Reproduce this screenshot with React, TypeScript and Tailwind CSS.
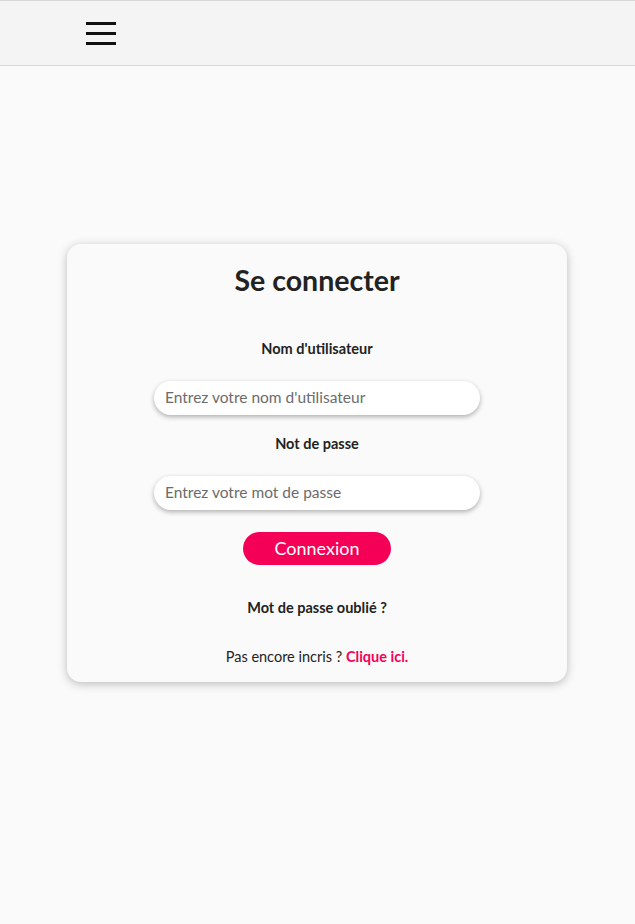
import React from 'react';

export default function App() {
  return (
    <div className="min-h-screen bg-[#fafafa] font-['Lato',sans-serif] text-[#222]">
      {/* Header */}
      <header className="h-[66px] border-y border-[#d9d9d9] bg-[#f4f4f4] flex items-center">
        <button className="ml-[86px] flex flex-col gap-[7px]">
          <span className="block w-[30px] h-[3px] bg-[#111]" />
          <span className="block w-[30px] h-[3px] bg-[#111]" />
          <span className="block w-[30px] h-[3px] bg-[#111]" />
        </button>
      </header>

      {/* Login card */}
      <main className="pt-[178px]">
        <div className="ml-[67px] w-[500px] rounded-[14px] bg-[#fafafa] shadow-[0_2px_10px_rgba(0,0,0,0.25)] flex flex-col items-center pt-[18px] pb-[15px]">
          <h1 className="text-[28.5px] leading-[36px] font-bold">Se connecter</h1>

          <label className="mt-[41px] text-[14.5px] leading-[20px] font-bold">Nom d'utilisateur</label>
          <input
            type="text"
            placeholder="Entrez votre nom d'utilisateur"
            className="mt-[22px] w-[326px] h-[34px] rounded-full bg-white px-[11px] pb-[3px] text-[15.5px] shadow-[0_2px_5px_rgba(0,0,0,0.3)] outline-none placeholder:text-[#6b6b6b]"
          />

          <label className="mt-[19px] text-[14.5px] leading-[20px] font-bold">Not de passe</label>
          <input
            type="password"
            placeholder="Entrez votre mot de passe"
            className="mt-[22px] w-[326px] h-[34px] rounded-full bg-white px-[11px] pb-[3px] text-[15.5px] shadow-[0_2px_5px_rgba(0,0,0,0.3)] outline-none placeholder:text-[#6b6b6b]"
          />

          <button className="mt-[22px] w-[148px] h-[33px] rounded-full bg-[#f50057] text-white text-[18px] leading-[31px]">
            Connexion
          </button>

          <p className="mt-[33px] text-[14.5px] leading-[20px] font-bold">Mot de passe oublié ?</p>

          <p className="mt-[29px] text-[14.5px] leading-[20px]">
            Pas encore incris ? <a className="text-[#f50057] font-bold">Clique ici.</a>
          </p>
        </div>
      </main>
    </div>
  );
}
